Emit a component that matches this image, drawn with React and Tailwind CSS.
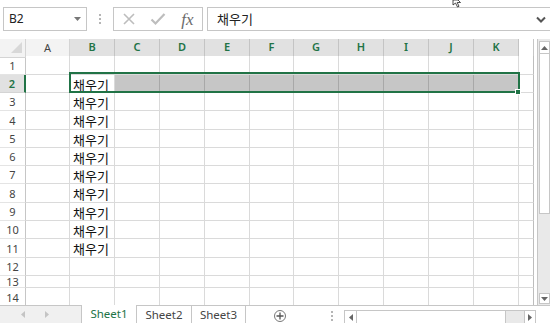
import React from "react";

const COLS = ["A", "B", "C", "D", "E", "F", "G", "H", "I", "J", "K"];
const ROW_H = ["h-[17px]", "h-[19px]", "h-[18px]", "h-[18px]", "h-[19px]", "h-[18px]", "h-[18px]", "h-[18px]", "h-[19px]", "h-[18px]", "h-[18px]", "h-[19px]", "h-[18px]", "h-[12px]"];
const GRID = "grid grid-cols-[26px_44px_45px_45px_45px_45px_44px_45px_45px_45px_45px_45px_15px]";
const ui = "font-['Noto_Sans','Open_Sans',sans-serif]";
const kr = "font-['Noto_Sans_CJK_KR',sans-serif]";

function Tri({ dir = "down", className = "" }) {
  const pts = {
    down: "0,0 7,0 3.5,4",
    up: "0,4 7,4 3.5,0",
    left: "4,0 4,7 0,3.5",
    right: "0,0 0,7 4,3.5",
  }[dir];
  const vb = dir === "down" || dir === "up" ? "0 0 7 4" : "0 0 4 7";
  const size = dir === "down" || dir === "up" ? { w: 7, h: 4 } : { w: 4, h: 7 };
  return (
    <svg width={size.w} height={size.h} viewBox={vb} className={className}>
      <polygon points={pts} fill="currentColor" />
    </svg>
  );
}

function Dots() {
  return (
    <div className="flex flex-col gap-[2px] items-center">
      <span className="w-[2px] h-[2px] bg-[#b5b5b5]" />
      <span className="w-[2px] h-[2px] bg-[#b5b5b5]" />
      <span className="w-[2px] h-[2px] bg-[#b5b5b5]" />
    </div>
  );
}

function TopBar() {
  return (
    <div className="h-[39px] flex items-start pt-[7px]">
      <div className="ml-[3px] w-[84px] h-[24px] border border-[#c6c6c6] flex items-center justify-between pl-[5px] pr-[5px]">
        <span className={`${ui} text-[12px] text-[#222]`}>B2</span>
        <Tri className="text-[#777]" />
      </div>
      <div className="w-[26px] h-[24px] flex items-center justify-center">
        <Dots />
      </div>
      <div className="w-[90px] h-[24px] border border-[#c6c6c6] flex items-center">
        <div className="w-[30px] flex justify-center">
          <svg width="14" height="14" viewBox="0 0 14 14">
            <path d="M2 2 L12 12 M12 2 L2 12" stroke="#bdbdbd" strokeWidth="1.6" />
          </svg>
        </div>
        <div className="w-[30px] flex justify-center">
          <svg width="16" height="14" viewBox="0 0 16 14">
            <path d="M1.5 7.5 L5.5 11.5 L14.5 2" stroke="#bdbdbd" strokeWidth="2.2" fill="none" />
          </svg>
        </div>
        <div className="w-[30px] flex justify-center">
          <span className="font-['Liberation_Serif',serif] italic text-[17px] leading-none text-[#6b6b6b]">fx</span>
        </div>
      </div>
      <div className="ml-[4px] flex-1 h-[24px] border border-r-0 border-[#c6c6c6] flex items-center pl-[9px] pr-[4px]">
        <span className={`${kr} text-[13px] text-[#222] flex-1`}>채우기</span>
        <svg width="10" height="7" viewBox="0 0 10 7">
          <path d="M1 1.5 L5 5.5 L9 1.5" stroke="#555" strokeWidth="2" fill="none" />
        </svg>
      </div>
    </div>
  );
}

function HeaderRow() {
  return (
    <div className={`${GRID} ${ROW_H[0]}`}>
      <div className="relative bg-[#f3f3f3] border-r border-b border-[#d4d4d4]">
        <svg width="12" height="12" viewBox="0 0 12 12" className="absolute right-[2px] bottom-[3px]">
          <polygon points="11,0 11,11 0,11" fill="#d8d8d8" />
        </svg>
      </div>
      {COLS.map((c) => {
        const sel = c !== "A";
        return (
          <div
            key={c}
            className={`${ui} text-[11px] flex items-center justify-center border-r ${
              sel
                ? "bg-[#e1e1e1] text-[#217346] font-semibold border-[#c4c4c4] border-b-2 border-b-[#217346]"
                : "bg-[#f3f3f3] text-[#444] border-[#d4d4d4] border-b border-b-[#c6c6c6]"
            }`}
          >
            {c}
          </div>
        );
      })}
      <div className="border-r border-b border-[#c6c6c6] bg-white" />
    </div>
  );
}

function DataRow({ n }) {
  const sel = n === 2;
  const filled = n >= 2 && n <= 11;
  const last = n === 14;
  return (
    <div className={`${GRID} ${ROW_H[n]} overflow-hidden`}>
      <div
        className={`${ui} text-[11px] leading-[15px] flex justify-center border-b overflow-hidden ${
          last ? "items-start pt-[2px]" : "items-center"
        } ${
          sel
            ? "bg-[#e1e1e1] text-[#217346] font-semibold border-r-2 border-r-[#217346] border-b-[#d4d4d4]"
            : "bg-white text-[#444] border-r border-r-[#c6c6c6] border-b-[#e4e4e4]"
        }`}
      >
        {n}
      </div>
      {COLS.map((c) => {
        const inSel = sel && c !== "A" && c !== "B";
        return (
          <div
            key={c}
            className={`border-b border-r overflow-hidden whitespace-nowrap ${
              inSel ? "bg-[#c6c6c6] border-r-[#a8a8a8] border-b-[#a8a8a8]" : "bg-white border-[#dadada]"
            }`}
          >
            {c === "B" && filled && (
              <div className={`${kr} text-[13px] leading-[17px] text-[#111] pl-[3px] pt-[1px]`}>채우기</div>
            )}
          </div>
        );
      })}
      <div className="border-b border-r border-b-[#dadada] border-r-[#bdbdbd] bg-white" />
    </div>
  );
}

function VScroll() {
  return (
    <div className="ml-[3px] w-[13px] border-l border-[#c6c6c6] bg-[#e9e9e9] flex flex-col items-center">
      <div className="mt-[2px] w-[11px] h-[13px] border border-[#c6c6c6] bg-white flex items-center justify-center">
        <Tri dir="up" className="text-[#666]" />
      </div>
      <div className="w-[11px] h-[160px] border border-t-0 border-[#c6c6c6] bg-white" />
      <div className="flex-1" />
      <div className="mb-[1px] w-[11px] h-[11px] border border-[#c6c6c6] bg-white flex items-center justify-center">
        <Tri className="text-[#666]" />
      </div>
    </div>
  );
}

function TabBar() {
  return (
    <div className="h-[18px] flex">
      <div className="w-[82px] bg-[#f0f0f0] border-t border-r border-[#c6c6c6] flex items-center">
        <Tri dir="left" className="ml-[21px] text-[#c4c4c4]" />
        <Tri dir="right" className="ml-[20px] text-[#c4c4c4]" />
      </div>
      <div className={`${ui} w-[55px] bg-white border-r border-[#c6c6c6] flex items-center justify-center text-[11.5px] text-[#217346]`}>
        Sheet1
      </div>
      <div className={`${ui} w-[55px] bg-white border-t border-r border-[#c6c6c6] flex items-center justify-center text-[11.5px] text-[#444]`}>
        Sheet2
      </div>
      <div className={`${ui} w-[54px] bg-white border-t border-r border-[#c6c6c6] flex items-center justify-center text-[11.5px] text-[#444]`}>
        Sheet3
      </div>
      <div className="flex-1 bg-white border-t border-[#c6c6c6] flex items-start">
        <div className="ml-[28px] mt-[4px] w-[12px] h-[12px] rounded-full border border-[#777] flex items-center justify-center">
          <svg width="8" height="8" viewBox="0 0 8 8">
            <path d="M4 0.5 V7.5 M0.5 4 H7.5" stroke="#555" strokeWidth="1.3" />
          </svg>
        </div>
        <div className="ml-[45px] mt-[5px]">
          <Dots />
        </div>
        <div className="ml-[11px] mt-[4px] flex h-[14px]">
          <div className="w-[13px] border border-[#c6c6c6] bg-white flex items-center justify-center">
            <Tri dir="left" className="text-[#666]" />
          </div>
          <div className="w-[149px] border-y border-r border-[#c6c6c6] bg-white" />
          <div className="w-[18px] bg-[#e9e9e9] border-y border-[#c6c6c6]" />
          <div className="w-[12px] border border-[#c6c6c6] bg-white flex items-center justify-center">
            <Tri dir="right" className="text-[#666]" />
          </div>
        </div>
      </div>
    </div>
  );
}

export default function App() {
  const rows = Array.from({ length: 14 }, (_, i) => i + 1);
  return (
    <div className="relative w-[550px] h-[323px] overflow-hidden bg-white">
      <TopBar />
      <div className="flex h-[266px]">
        <div className="relative w-[534px] overflow-hidden">
          <HeaderRow />
          {rows.map((n) => (
            <DataRow key={n} n={n} />
          ))}
          {/* selection B2:K2 */}
          <div className="absolute left-[69px] top-[33px] w-[451px] h-[21px] border-2 border-[#217346] pointer-events-none" />
          <div className="absolute left-[515px] top-[50px] w-[6px] h-[6px] bg-[#217346] border border-white" />
        </div>
        <VScroll />
      </div>
      <TabBar />
      {/* mouse cursor */}
      <svg width="12" height="10" viewBox="0 0 12 10" className="absolute left-[452px] top-0">
        <path d="M1 0 V5 L3.5 3 L5.5 7 L7 6.3 L5.2 2.5 L8.5 2.5 L6 0 Z" fill="white" stroke="#222" strokeWidth="0.8" />
      </svg>
    </div>
  );
}
